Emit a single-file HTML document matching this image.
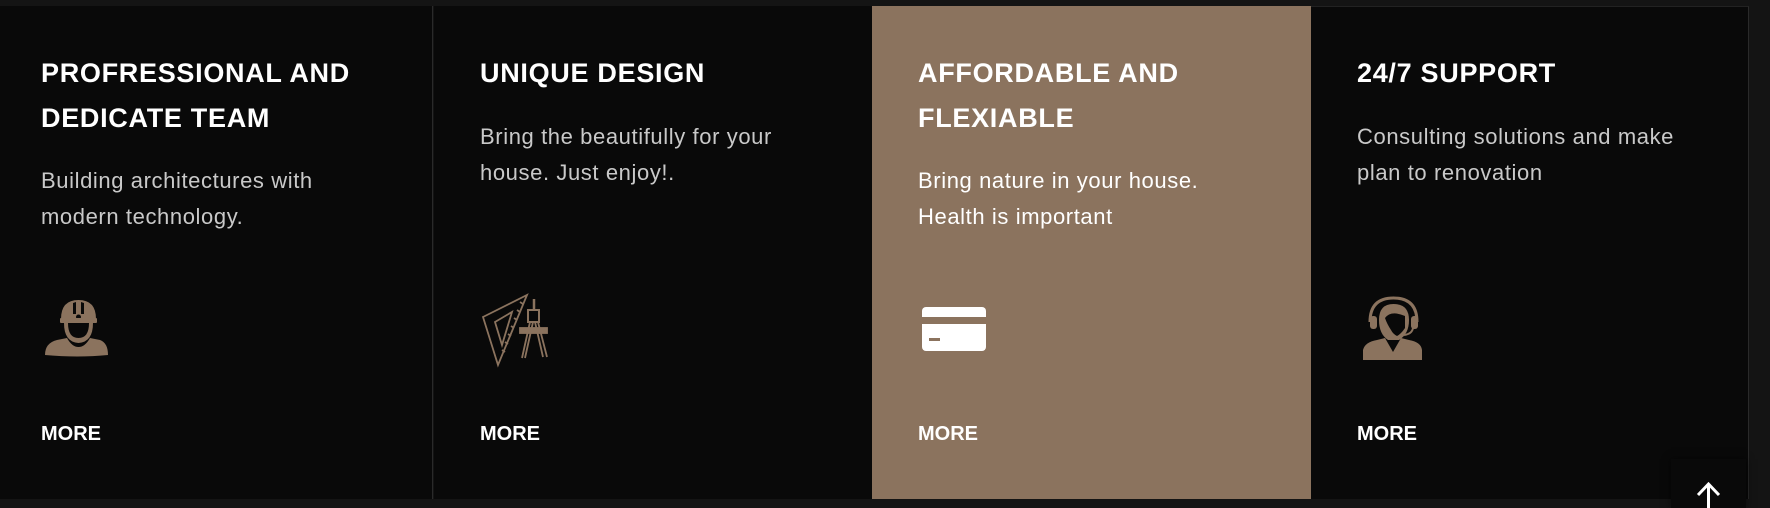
<!DOCTYPE html>
<html><head><meta charset="utf-8"><style>
*{margin:0;padding:0;box-sizing:border-box}
body{width:1770px;height:508px;background:#141414;position:relative;overflow:hidden;font-family:"Liberation Sans",Arial,sans-serif}
.col{position:absolute;top:6px;height:493px;background:#090909}
.t{position:absolute;color:#fff;font-weight:bold;font-size:27px;line-height:45px;white-space:nowrap;letter-spacing:0.7px}
.p{position:absolute;color:#c9c9c9;font-size:22px;line-height:36px;white-space:nowrap;letter-spacing:0.6px}
.m{position:absolute;color:#fff;font-weight:bold;font-size:20px;top:423px}
svg{position:absolute}
</style></head><body>
<div class="col" style="left:0;width:433px;border-right:1px solid #2a2a2a"></div>
<div class="col" style="left:434px;width:438px"></div>
<div class="col" style="left:872px;width:439px;background:#8b735e"></div>
<div class="col" style="left:1311px;width:438px;border-right:1px solid #2a2a2a;border-top:1px solid #222"></div>

<div class="t" style="left:41px;top:51px">PROFRESSIONAL AND<br>DEDICATE TEAM</div>
<div class="p" style="left:41px;top:163px">Building architectures with<br>modern technology.</div>
<div class="m" style="left:41px">MORE</div>

<div class="t" style="left:480px;top:51px">UNIQUE DESIGN</div>
<div class="p" style="left:480px;top:119px">Bring the beautifully for your<br>house. Just enjoy!.</div>
<div class="m" style="left:480px">MORE</div>

<div class="t" style="left:918px;top:51px">AFFORDABLE AND<br>FLEXIABLE</div>
<div class="p" style="left:918px;top:163px;color:#fff">Bring nature in your house.<br>Health is important</div>
<div class="m" style="left:918px">MORE</div>

<div class="t" style="left:1357px;top:51px">24/7 SUPPORT</div>
<div class="p" style="left:1357px;top:119px">Consulting solutions and make<br>plan to renovation</div>
<div class="m" style="left:1357px">MORE</div>

<!-- worker -->
<svg style="left:40px;top:290px" width="80" height="75" viewBox="0 0 80 75" fill="#8b735e">
<path d="M21 29 Q21 10 38.5 10 Q56 10 56 29 Z" />
<path d="M33 13 L36 12 L36 24 L33 24 Z M41 12 L44 13 L44 24 L41 24Z" fill="#090909"/>
<circle cx="38.5" cy="27" r="2.5" fill="#090909"/>
<rect x="20" y="28" width="37" height="5" rx="1"/>
<path d="M24 33 Q24 52 38.5 53 Q53 52 53 33 L49 33 Q49 48 38.5 48 Q28 48 28 33Z"/>
<path d="M5 65 Q5 53 17 50 L27 48 Q32 57 38.5 57 Q45 57 50 48 L60 50 Q68 53 68 65 Q38 68 5 65Z"/>
</svg>

<!-- design tools -->
<svg style="left:470px;top:285px" width="90" height="85" viewBox="0 0 90 85" fill="none" stroke="#8b735e" stroke-width="1.8">
<path d="M13 32 L57 10 L28 80 Z"/>
<path d="M25 37 L42 27 L32 60 Z"/>
<path d="M50 17 l3 2 M47 25 l3 2 M44 33 l3 2 M41 41 l3 2 M38 49 l3 2 M35 57 l3 2 M32 65 l3 2"/>
<path d="M64 14 L64 25" stroke-width="2.5"/>
<rect x="58" y="25" width="11" height="12" stroke-width="2"/>
<rect x="50" y="43" width="27" height="5" fill="#8b735e"/>
<path d="M60 37 L52 73 M63 37 L55 73 M65 37 L73 72 M68 37 L77 72"/>
</svg>

<!-- card -->
<svg style="left:918px;top:304px" width="72" height="50" viewBox="0 0 72 50">
<rect x="4" y="3" width="64" height="44" rx="4" fill="#fff"/>
<rect x="4" y="13" width="64" height="7" fill="#8b735e"/>
<rect x="11" y="34" width="11" height="3" fill="#8b735e"/>
</svg>

<!-- support -->
<svg style="left:1355px;top:290px" width="75" height="75" viewBox="0 0 75 75" fill="#8b735e">
<path d="M15 32 Q15 8 38.5 8 Q62 8 62 32" fill="none" stroke="#8b735e" stroke-width="3"/>
<rect x="15" y="26" width="7" height="13" rx="3"/>
<rect x="56" y="26" width="7" height="13" rx="3"/>
<path d="M24 30 Q24 14 38.5 14 Q54 14 54 30 Q54 44 44 50 L33 50 Q24 44 24 30Z"/>
<path d="M30 28 Q36 20 50 26 L50 38 Q46 44 42 46 Q38 44 36 40 Q32 34 30 28Z" fill="#090909"/>
<path d="M58 38 Q57 44 49 45" fill="none" stroke="#8b735e" stroke-width="2"/>
<path d="M8 70 L8 60 Q10 52 22 50 L30 48 L38 62 L46 48 L54 50 Q66 52 67 60 L67 70Z"/>
</svg>

<!-- back to top -->
<div style="position:absolute;left:1671px;top:459px;width:75px;height:49px;background:#090909;box-shadow:0 0 8px rgba(0,0,0,.6)"></div>
<svg style="left:1671px;top:459px" width="75" height="49" viewBox="0 0 75 49" fill="none" stroke="#fff" stroke-width="3">
<path d="M37.5 27 L37.5 49 M27 36 L37.5 25 L48 36"/>
</svg>
</body></html>
